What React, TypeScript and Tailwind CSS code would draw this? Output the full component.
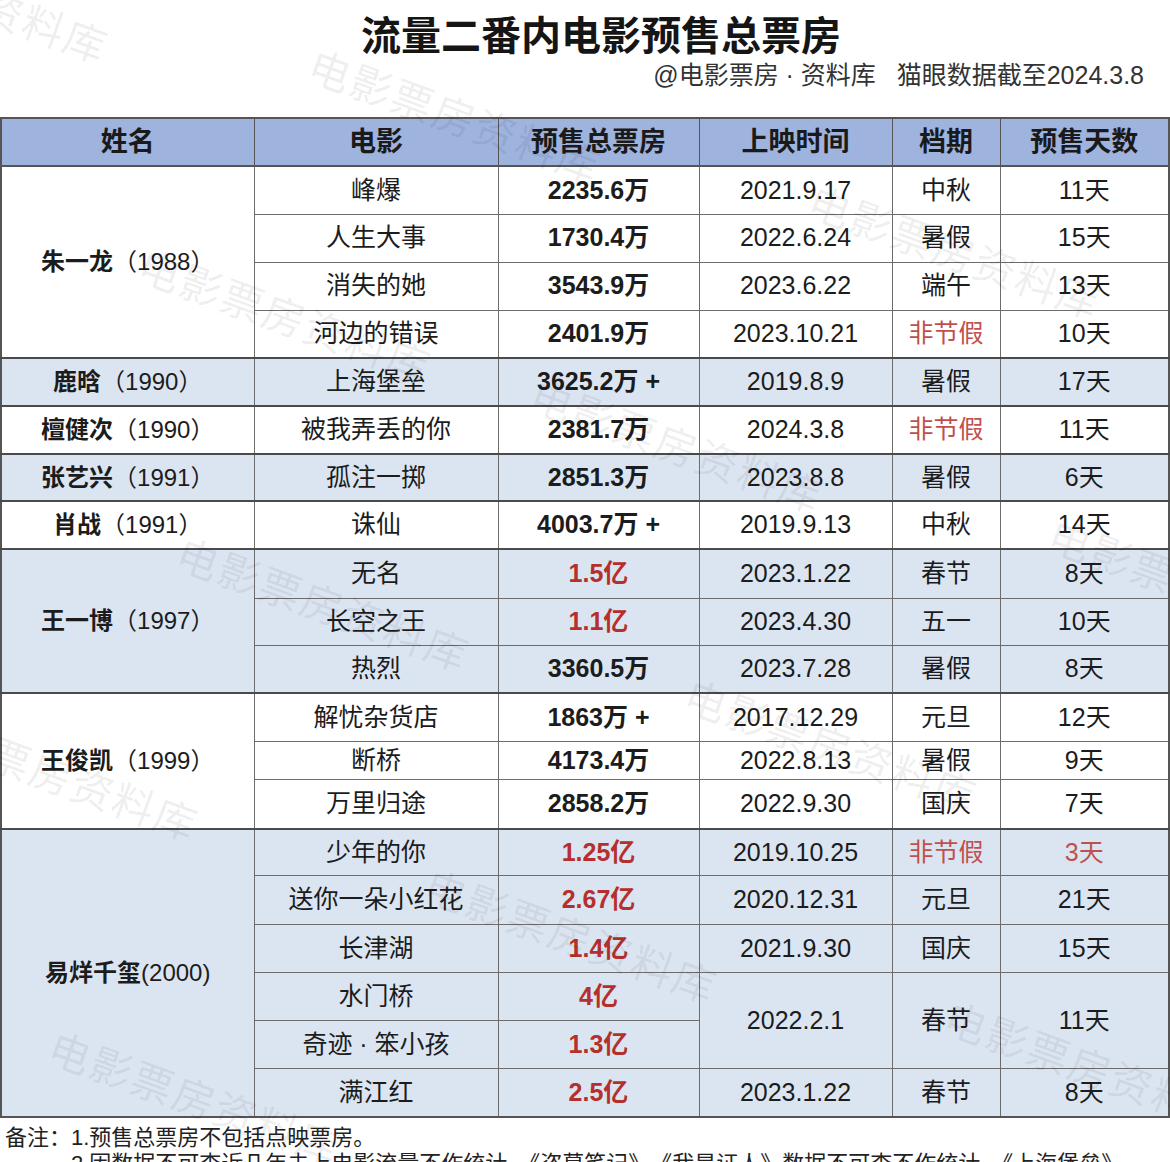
type Row = {
  film: string;
  box: string;
  red?: boolean;
  date?: string;
  period?: string;
  periodRed?: boolean;
  days?: string;
  daysRed?: boolean;
  span?: number;
  h: string;
};

type Group = { name: string; year: string; blue: boolean; rows: Row[] };

const groups: Group[] = [
  {
    name: '朱一龙',
    year: '（1988）',
    blue: false,
    rows: [
      { film: '峰爆', box: '2235.6万', date: '2021.9.17', period: '中秋', days: '11天', h: 'h-[48px]' },
      { film: '人生大事', box: '1730.4万', date: '2022.6.24', period: '暑假', days: '15天', h: 'h-[48px]' },
      { film: '消失的她', box: '3543.9万', date: '2023.6.22', period: '端午', days: '13天', h: 'h-[48px]' },
      { film: '河边的错误', box: '2401.9万', date: '2023.10.21', period: '非节假', periodRed: true, days: '10天', h: 'h-[48px]' },
    ],
  },
  {
    name: '鹿晗',
    year: '（1990）',
    blue: true,
    rows: [{ film: '上海堡垒', box: '3625.2万 +', date: '2019.8.9', period: '暑假', days: '17天', h: 'h-[48px]' }],
  },
  {
    name: '檀健次',
    year: '（1990）',
    blue: false,
    rows: [{ film: '被我弄丢的你', box: '2381.7万', date: '2024.3.8', period: '非节假', periodRed: true, days: '11天', h: 'h-[48px]' }],
  },
  {
    name: '张艺兴',
    year: '（1991）',
    blue: true,
    rows: [{ film: '孤注一掷', box: '2851.3万', date: '2023.8.8', period: '暑假', days: '6天', h: 'h-[47px]' }],
  },
  {
    name: '肖战',
    year: '（1991）',
    blue: false,
    rows: [{ film: '诛仙', box: '4003.7万 +', date: '2019.9.13', period: '中秋', days: '14天', h: 'h-[48px]' }],
  },
  {
    name: '王一博',
    year: '（1997）',
    blue: true,
    rows: [
      { film: '无名', box: '1.5亿', red: true, date: '2023.1.22', period: '春节', days: '8天', h: 'h-[49px]' },
      { film: '长空之王', box: '1.1亿', red: true, date: '2023.4.30', period: '五一', days: '10天', h: 'h-[47px]' },
      { film: '热烈', box: '3360.5万', date: '2023.7.28', period: '暑假', days: '8天', h: 'h-[48px]' },
    ],
  },
  {
    name: '王俊凯',
    year: '（1999）',
    blue: false,
    rows: [
      { film: '解忧杂货店', box: '1863万 +', date: '2017.12.29', period: '元旦', days: '12天', h: 'h-[48px]' },
      { film: '断桥', box: '4173.4万', date: '2022.8.13', period: '暑假', days: '9天', h: 'h-[38px]' },
      { film: '万里归途', box: '2858.2万', date: '2022.9.30', period: '国庆', days: '7天', h: 'h-[49px]' },
    ],
  },
  {
    name: '易烊千玺',
    year: '(2000)',
    blue: true,
    rows: [
      { film: '少年的你', box: '1.25亿', red: true, date: '2019.10.25', period: '非节假', periodRed: true, days: '3天', daysRed: true, h: 'h-[47px]' },
      { film: '送你一朵小红花', box: '2.67亿', red: true, date: '2020.12.31', period: '元旦', days: '21天', h: 'h-[49px]' },
      { film: '长津湖', box: '1.4亿', red: true, date: '2021.9.30', period: '国庆', days: '15天', h: 'h-[48px]' },
      { film: '水门桥', box: '4亿', red: true, date: '2022.2.1', period: '春节', days: '11天', span: 2, h: 'h-[48px]' },
      { film: '奇迹 · 笨小孩', box: '1.3亿', red: true, h: 'h-[48px]' },
      { film: '满江红', box: '2.5亿', red: true, date: '2023.1.22', period: '春节', days: '8天', h: 'h-[48px]' },
    ],
  },
];

// watermark anchors (top-left of each rotated label)
const marks: [number, number][] = [
  [-175, -78],
  [318, 42],
  [818, 178],
  [148, 242],
  [540, 372],
  [1058, 512],
  [186, 530],
  [-85, 700],
  [694, 672],
  [434, 862],
  [954, 994],
  [58, 1024],
];

const cell = 'border border-[#6c6c6c] text-center align-middle p-0';
const groupTop = 'border-t-2 border-t-[#4a4a4a]';

export default function App() {
  return (
    <div className="relative h-[1162px] w-[1170px] overflow-hidden bg-white font-['Liberation_Sans','Noto_Sans_CJK_SC',sans-serif] text-[#1c1c1c]">
      {/* Title */}
      <div className="pt-[13px]">
        <h1 className="pl-[32px] text-center text-[40px] leading-[40px] font-bold text-[#151515] font-['Noto_Sans_CJK_SC',sans-serif]">
          流量二番内电影预售总票房
        </h1>
        <div className="mt-[10px] pr-[26px] text-right text-[25px] leading-[24px] text-[#333]">
          @电影票房 · 资料库&nbsp;&nbsp;&nbsp;猫眼数据截至2024.3.8
        </div>
      </div>

      {/* Table */}
      <table className="mt-[30px] w-[1170px] table-fixed border-collapse border-2 border-[#555]">
        <colgroup>
          <col className="w-[253px]" />
          <col className="w-[244px]" />
          <col className="w-[201px]" />
          <col className="w-[193px]" />
          <col className="w-[108px]" />
          <col />
        </colgroup>
        <thead>
          <tr className="h-[48px] bg-[#9eb3de] text-[27px] font-bold text-[#1a1a1a]">
            {['姓名', '电影', '预售总票房', '上映时间', '档期', '预售天数'].map((t) => (
              <th key={t} className={cn(cell, 'border-b-2 border-[#555] font-bold')}>
                {t}
              </th>
            ))}
          </tr>
        </thead>
        <tbody className="text-[25px]">
          {groups.map((g) =>
            g.rows.map((r, i) => (
              <tr key={g.name + r.film} className={cn(r.h, g.blue ? 'bg-[#dbe5f2]' : 'bg-white')}>
                {i === 0 && (
                  <td rowSpan={g.rows.length} className={cn(cell, groupTop, 'text-[24px]')}>
                    <span className="font-bold">{g.name}</span>
                    <span>{g.year}</span>
                  </td>
                )}
                <td className={cn(cell, i === 0 && groupTop)}>{r.film}</td>
                <td className={cn(cell, 'font-bold', r.red && 'text-[#b5302c]', i === 0 && groupTop)}>{r.box}</td>
                {r.date && (
                  <>
                    <td rowSpan={r.span ?? 1} className={cn(cell, i === 0 && groupTop)}>
                      {r.date}
                    </td>
                    <td rowSpan={r.span ?? 1} className={cn(cell, r.periodRed && 'text-[#c0504d]', i === 0 && groupTop)}>
                      {r.period}
                    </td>
                    <td rowSpan={r.span ?? 1} className={cn(cell, r.daysRed && 'text-[#c0504d]', i === 0 && groupTop)}>
                      {r.days}
                    </td>
                  </>
                )}
              </tr>
            )),
          )}
        </tbody>
      </table>

      {/* Notes */}
      <div className="mt-[7px] flex pl-[5px] text-[22px] leading-[26px] text-[#222]">
        <span className="shrink-0">备注：</span>
        <div className="whitespace-nowrap">
          <div>1.预售总票房不包括点映票房。</div>
          <div>2.因数据不可查近几年未上电影流量不作统计，《盗墓笔记》、《我是证人》数据不可查不作统计，《上海堡垒》</div>
        </div>
      </div>

      {/* Watermarks */}
      <div className="pointer-events-none absolute inset-0">
        {marks.map(([x, y], i) => (
          <span
            key={i}
            className="absolute origin-top-left rotate-[20deg] whitespace-nowrap text-[42px] leading-none tracking-[2px] text-black/[0.08] font-['Noto_Sans_CJK_SC',sans-serif]"
            style={{ left: x, top: y }}
          >
            电影票房资料库
          </span>
        ))}
      </div>
    </div>
  );
}

function cn(...c: (string | false | undefined)[]) {
  return c.filter(Boolean).join(' ');
}
